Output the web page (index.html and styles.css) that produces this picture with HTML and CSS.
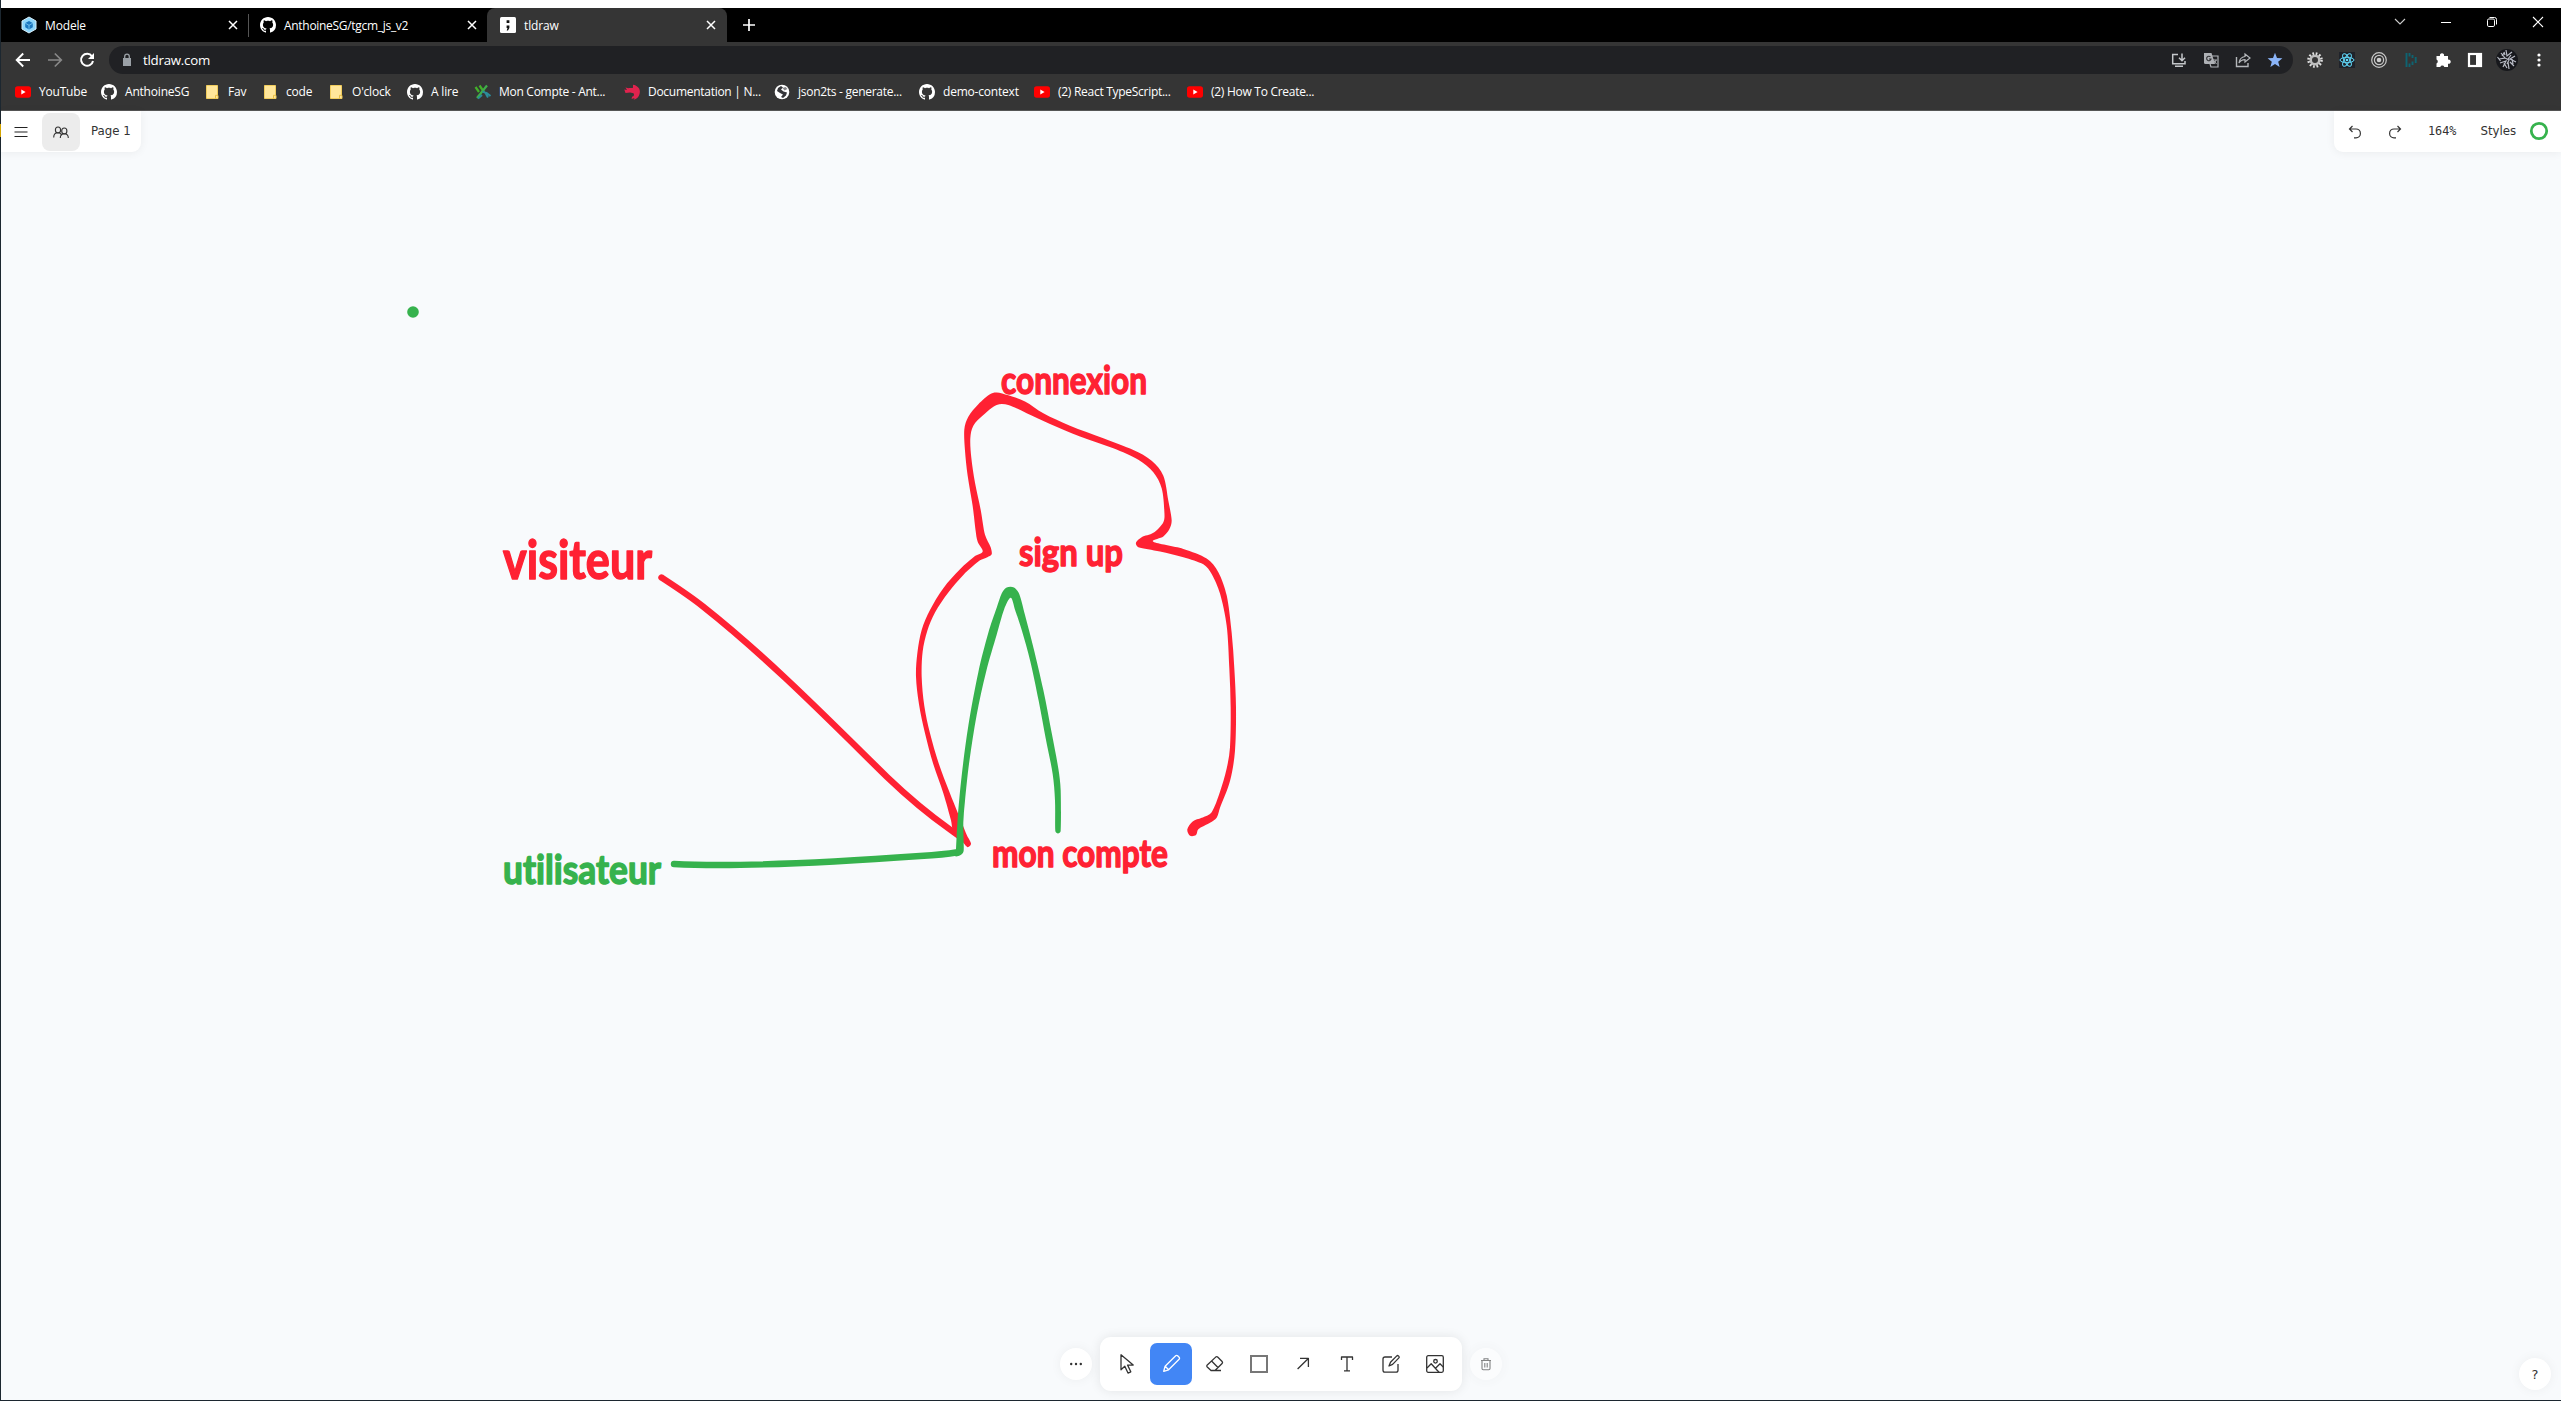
FILE: index.html
```html
<!DOCTYPE html>
<html lang="fr">
<head>
<meta charset="utf-8">
<title>tldraw</title>
<link rel="stylesheet" href="styles.css">
</head>
<body>
<svg class="defs" width="0" height="0">
  <symbol id="github" viewBox="0 0 16 16"><path d="M8 0C3.58 0 0 3.58 0 8c0 3.54 2.29 6.53 5.47 7.59.4.07.55-.17.55-.38 0-.19-.01-.82-.01-1.49-2.01.37-2.53-.49-2.69-.94-.09-.23-.48-.94-.82-1.13-.28-.15-.68-.52-.01-.53.63-.01 1.08.58 1.23.82.72 1.21 1.87.87 2.33.66.07-.52.28-.87.51-1.07-1.78-.2-3.64-.89-3.64-3.95 0-.87.31-1.59.82-2.15-.08-.2-.36-1.02.08-2.12 0 0 .67-.21 2.2.82.64-.18 1.32-.27 2-.27s1.36.09 2 .27c1.53-1.04 2.2-.82 2.2-.82.44 1.1.16 1.92.08 2.12.51.56.82 1.27.82 2.15 0 3.07-1.87 3.75-3.65 3.95.29.25.54.73.54 1.48 0 1.07-.01 1.93-.01 2.2 0 .21.15.46.55.38A8 8 0 0 0 16 8c0-4.42-3.58-8-8-8z" fill="#fff"/></symbol>
  <symbol id="youtube" viewBox="0 0 16 16"><rect y="2.3" width="16" height="11.4" rx="2.6" fill="#f00"/><path d="M6.3 5.6v4.8L10.6 8z" fill="#fff"/></symbol>
  <symbol id="folder" viewBox="0 0 16 16"><path d="M2.5 1.5h11v10h.5v3h-11.500z" fill="#ffe69a" stroke="#f0cc5c"/><path d="M11.500 14.500v-3.200h2.500" fill="none" stroke="#e8bf45"/></symbol>
  <symbol id="close" viewBox="0 0 16 16"><path d="M4 4l8 8M12 4l-8 8" stroke="#fff" stroke-width="1.5"/></symbol>
</svg>
<div class="desktop-strip"></div>
<div class="window">
  <header class="tabs">
    <div class="tab first"><svg class="ic"><g><path d="M8 0l7 4v8l-7 4-7-4V4z" fill="#8ed6fb"/><path d="M8 0l7 4v8l-7 4-7-4V4z" fill="none" stroke="#d8effb"/><path d="M8 4l3.800 2.100v4.200L8 12.400l-3.800-2.100V6.100z" fill="#1c78c0"/><path d="M4.200 6.100L8 8.300l3.800-2.200M8 8.300v4" stroke="#8ed6fb" stroke-width=".7" fill="none"/></g></svg><span>Modele</span><svg class="ic x"><use href="#close"/></svg></div>
    <div class="tab second"><svg class="ic"><use href="#github"/></svg><span class="wide">AnthoineSG/tgcm_js_v2</span><svg class="ic x"><use href="#close"/></svg></div>
    <div class="tab active"><svg class="ic"><rect width="16" height="16" rx="1.500" fill="#fff"/><path d="M6.600 3.200h2.800v2.800H6.600zM6.600 8.500h2.800v2.400L8 13.400H6.700l.8-2.400h-.9z" fill="#111"/></svg><span>tldraw</span><svg class="ic x"><use href="#close"/></svg></div>
    <svg class="ic plus"><path d="M8 2v12M2 8h12" stroke="#fff" stroke-width="1.700"/></svg>
    <div class="winctl">
      <svg class="ic"><path d="M3 5l5 5 5-5" stroke="#ccc" stroke-width="1.100" fill="none"/></svg>
      <svg class="ic"><path d="M3 8.500h10" stroke="#fff"/></svg>
      <svg class="ic"><rect x="3.500" y="5" width="7" height="7.500" rx="1.300" fill="none" stroke="#fff"/><path d="M5.500 3.500h5a2 2 0 0 1 2 2v5" fill="none" stroke="#fff"/></svg>
      <svg class="ic"><path d="M3 3l10 10M13 3L3 13" stroke="#fff" stroke-width="1.100"/></svg>
    </div>
  </header>
  <nav class="toolbar">
    <svg class="ic"><path d="M15 8H2M8.200 1.500L1.700 8l6.500 6.500" stroke="#fff" stroke-width="1.900" fill="none"/></svg>
    <svg class="ic"><path d="M1 8h13M7.800 1.500L14.300 8l-6.500 6.500" stroke="#888" stroke-width="1.700" fill="none"/></svg>
    <svg class="ic"><path d="M13 4.300A6 6 0 1 0 14 9" stroke="#fff" stroke-width="2" fill="none"/><path d="M15 1v6H9z" fill="#fff"/></svg>
    <div class="omnibox">
      <svg class="ic lock"><path d="M4 6h8v8H4z" fill="#9aa0a6"/><path d="M5.700 6V4.500a2.300 2.300 0 0 1 4.600 0V6" stroke="#9aa0a6" stroke-width="1.300" fill="none"/></svg>
      <span class="url">tldraw.com</span>
      <div class="actions">
        <svg class="ic"><path d="M7 2.500H1.700v9.300H14V9M4 14.200h8M11 1.500v7M8 5.700l3 3 3-3" stroke="#c4c7ca" stroke-width="1.500" fill="none"/></svg>
        <svg class="ic"><path d="M1 1h7.500l3.500 11H2.500A1.500 1.500 0 0 1 1 10.500z" fill="#aeb1b5"/><path d="M9 4h6v11H8l-1-3" fill="none" stroke="#aeb1b5" stroke-width="1.200"/><path d="M7.500 5A2.200 2.200 0 1 0 8 7H6" stroke="#303134" stroke-width="1.100" fill="none"/><path d="M10 8h4M13 8c-.5 2-1.200 2.700-2 3.500M11 9l2.500 3" stroke="#aeb1b5" fill="none"/></svg>
        <svg class="ic"><path d="M1.500 5v9.500h11.500V11" stroke="#b4b7ba" stroke-width="1.400" fill="none"/><path d="M10 2l5 4-5 4V7.700C7.500 7.700 5.500 8.500 4 11c.4-3.500 2.600-6 6-6.500z" stroke="#b4b7ba" stroke-width="1.200" fill="none"/></svg>
        <svg class="ic"><path d="M8 .8l2 5.100 5.400.3-4.200 3.500 1.400 5.400L8 12.100l-4.600 3 1.400-5.400L.6 6.200 6 5.900z" fill="#8ab4f8"/></svg>
      </div>
    </div>
    <div class="extensions">
      <svg class="ic"><circle cx="8" cy="8" r="6.500" fill="none" stroke="#e0e0e0" stroke-width="2.600" stroke-dasharray="1.700 1.700"/><circle cx="8" cy="8" r="4.300" fill="none" stroke="#bdbdbd" stroke-width="2.600"/></svg>
      <svg class="ic"><rect width="16" height="16" fill="#20232a"/><g fill="none" stroke="#61dafb" stroke-width="1"><ellipse cx="8" cy="8" rx="7" ry="2.700"/><ellipse cx="8" cy="8" rx="7" ry="2.700" transform="rotate(60 8 8)"/><ellipse cx="8" cy="8" rx="7" ry="2.700" transform="rotate(120 8 8)"/></g><circle cx="8" cy="8" r="1.300" fill="#61dafb"/></svg>
      <svg class="ic"><g fill="none" stroke="#c8c8c8" stroke-width="1.200"><circle cx="8" cy="8" r="7.300"/><circle cx="8" cy="8" r="4.600"/></g><circle cx="8" cy="8" r="2.300" fill="#ccc"/></svg>
      <svg class="ic"><path d="M3.500 1v14M6.500 1v3.500M6.500 11.500V15M9.500 3v3M9.500 9.500V13M12.700 5v6" stroke="#0e6472" stroke-width="1.900"/></svg>
      <svg class="ic"><path d="M1.500 4H5a2.100 2.100 0 1 1 4 0h4v3.700a2.100 2.100 0 1 1 0 4V15H9.300a2.100 2.100 0 0 0-4 0H1.500v-3.600a2.200 2.200 0 0 0 0-4z" fill="#fff"/></svg>
      <svg class="ic"><rect x="2" y="2" width="12" height="12" fill="none" stroke="#fff" stroke-width="2.200"/><path d="M9 2h5v12H9z" fill="#fff"/></svg>
      <svg class="avatar" viewBox="0 0 22 22"><circle cx="11" cy="11" r="11" fill="#17181c"/><path d="M5 4l4 5-6 1M10 1l1 6 5-4M19 7l-5 3 6 3M4 14l6-2-3 6M12 13l1 7M14 13l4 4M9 9l4 2-2 4M15 6l-3 4M1.500 8l3 4M8 3l1 3M6 7l2-3M16 10l1 5M8 14l3 5" stroke="#b9bcc6" stroke-width="1.200" fill="none"/></svg>
      <svg class="ic"><g fill="#fff"><circle cx="8" cy="3" r="1.600"/><circle cx="8" cy="8" r="1.600"/><circle cx="8" cy="13" r="1.600"/></g></svg>
    </div>
  </nav>
  <nav class="bookmarks">
    <a><svg class="ic"><use href="#youtube"/></svg>YouTube</a>
    <a><svg class="ic"><use href="#github"/></svg>AnthoineSG</a>
    <a><svg class="ic"><use href="#folder"/></svg>Fav</a>
    <a><svg class="ic"><use href="#folder"/></svg>code</a>
    <a><svg class="ic"><use href="#folder"/></svg>O'clock</a>
    <a><svg class="ic"><use href="#github"/></svg>A lire</a>
    <a class="tight"><svg class="ic"><path d="M.5 3L4 8M4.500 1.500L9 8" stroke="#43b02a" stroke-width="2.200" fill="none"/><path d="M12 1.500L2 14" stroke="#3fae49" stroke-width="2.200"/><path d="M7.500 7.800q3 0 4 3l1.500 2.700M11 8.500l4.500 3.500M7 11l-4 3.500" stroke="#2c8c99" stroke-width="2" fill="none"/></svg>Mon Compte - Ant...</a>
    <a class="tight"><svg class="ic"><path d="M9 .8c2.500 0 3 1 5 2.500 1.800 1.500 2.300 4 1.600 6.500-.7 3-3 5.500-6 5.900l1-1.700-3 1 .4-2.200c2-.5 2.500-2 1.500-3.500L6 8.500 1.500 9 .3 5.500 3 6 1.500 3.500l3 .8c1-.8 3 .2 4.500-.5z" fill="#e0234e"/></svg>Documentation | N...</a>
    <a class="tight"><svg class="ic"><circle cx="8" cy="8" r="7.300" fill="#fff"/><path d="M4 4l3-2 2 1.500-2 2 2.500 2 3.500 1-1 3-3 2.500-2-1 2-2.500-3-1.500L3 7z" fill="#35363a"/><path d="M8.500 4l3-1 2 2-3 1.500z" fill="#35363a" opacity=".6"/></svg>json2ts - generate...</a>
    <a><svg class="ic"><use href="#github"/></svg>demo-context</a>
    <a class="tight"><svg class="ic"><use href="#youtube"/></svg>(2) React TypeScript...</a>
    <a class="tight"><svg class="ic"><use href="#youtube"/></svg>(2) How To Create...</a>
  </nav>
  <main class="canvas">
    <svg class="drawing" width="2560" height="1289" viewBox="1 111 2560 1289">
      <circle cx="413" cy="312" r="5.800" fill="#36b24d"/>
      <path class="pen red" d="M661.500 577.500C676 587 690 596 703 606.500C767 657 828 719 887 777C911 800 938 821 950 829.500L959 836"/>
      <path id="red-loop" class="ink red"/>
      <g class="label red">
        <text x="503" y="578.500" font-size="54" textLength="149" lengthAdjust="spacingAndGlyphs">visiteur</text>
        <text x="1001" y="393.500" font-size="39" textLength="146" lengthAdjust="spacingAndGlyphs">connexion</text>
        <text x="1019" y="566" font-size="39" textLength="104" lengthAdjust="spacingAndGlyphs">sign up</text>
        <text x="992" y="866.500" font-size="39" textLength="176" lengthAdjust="spacingAndGlyphs">mon compte</text>
      </g>
      <text class="label green" x="503" y="883.500" font-size="40" textLength="158" lengthAdjust="spacingAndGlyphs">utilisateur</text>
      <path class="pen green" d="M674 864C740 867.500 850 861 920 856Q945 854.500 956 852.500"/>
      <path id="green-arch" class="ink green"/>
    </svg>
    <div class="top">
      <div class="panel left">
        <svg class="ic menu"><path d="M1.500 3.500h13M1.500 8h13M1.500 12.500h13" stroke="#222" stroke-width="1.200"/></svg>
        <div class="people"><svg class="ic"><g fill="none" stroke="#333" stroke-width="1.100"><ellipse cx="5" cy="6" rx="2.600" ry="3"/><path d="M.7 13.500c0-3 1.300-4.700 4.300-4.700 2.200 0 3.200 1 3.800 2.500"/><ellipse cx="11.300" cy="7" rx="2.600" ry="3"/><path d="M7.300 14c0-2.500 1.200-4.200 4-4.200s4 1.700 4 4.200"/></g></svg></div>
        <span>Page 1</span>
      </div>
      <div class="panel right">
        <svg class="ic"><path d="M5.500 2L2.500 5l3 3M2.500 5H9a4.400 4.400 0 0 1 0 8.800H7" fill="none" stroke="#333" stroke-width="1.200"/></svg>
        <svg class="ic"><path d="M10.500 2l3 3-3 3M13.500 5H7a4.400 4.400 0 0 0 0 8.800h2" fill="none" stroke="#333" stroke-width="1.200"/></svg>
        <span class="zoom">164%</span><span class="styles">Styles</span>
        <svg class="ring"><circle cx="10" cy="10" r="7.700" fill="none" stroke="#36b24d" stroke-width="2.800"/></svg>
      </div>
    </div>
    <div class="dock">
      <div class="round"><svg class="ic"><g fill="#333"><circle cx="3.200" cy="8" r="1.200"/><circle cx="8" cy="8" r="1.200"/><circle cx="12.800" cy="8" r="1.200"/></g></svg></div>
      <div class="tools">
        <div class="tool"><svg viewBox="0 0 20 20"><path d="M4 .8v15l3.800-3.600 3.200 6.900 2.800-1.300-3.200-6.700h5.600z"/></svg></div>
        <div class="tool on"><svg viewBox="0 0 20 20"><path d="M2.700 17.300l1.400-5L14.700 1.800c.6-.6 1.300-.6 1.900 0l1.500 1.500c.6.600.6 1.300 0 1.900L7.600 15.800zM4.200 12.300l3.400 3.400"/></svg></div>
        <div class="tool"><svg viewBox="0 0 20 20"><path d="M2 11.300l8.700-8.200c.7-.6 1.500-.6 2.200.1l4.200 4.300c.6.700.6 1.400 0 2L10 16.500H6L2 12.700q-.6-.7 0-1.400zM6.800 7.200l6.400 6.500M8 16.500h8"/></svg></div>
        <div class="tool"><svg viewBox="0 0 20 20"><path class="square" d="M2 2h16v16H2z"/></svg></div>
        <div class="tool"><svg viewBox="0 0 20 20"><path d="M4.600 15L15.300 4.500M7 4.400h8.400V13"/></svg></div>
        <div class="tool"><svg viewBox="0 0 20 20"><path d="M4.500 6V3h11v3M10 3v13.600M7 16.800h6"/></svg></div>
        <div class="tool"><svg viewBox="0 0 20 20"><path d="M11 3H4Q2 3 2 5v11.300q0 1.900 2 1.900h11q2 0 2-1.900V10"/><path d="M8 12l1.500-3.800 6.300-6.300q.8-.7 1.600 0l.5.500q.7.800 0 1.500l-6.300 6.500z"/></svg></div>
        <div class="tool"><svg viewBox="0 0 20 20"><rect x="1.700" y="1.700" width="16.600" height="16.600" rx="1.500"/><circle cx="10.500" cy="7.300" r="1.800"/><path d="M2 14l4.200-4.300L14 18.300M10.500 14.300l4.500-4.600 3.300 3.400"/></svg></div>
      </div>
      <div class="round faded"><svg class="ic"><path d="M3 4.500h10M6 4.500V2.700h4v1.800M4 4.500v8q0 1.200 1.200 1.200h5.600q1.200 0 1.200-1.200v-8M6.800 7v4.500M9.200 7v4.500" fill="none" stroke="#222" stroke-width="1.100"/></svg></div>
    </div>
    <div class="round help">?</div>
  </main>
</div>
<script src="strokes.js"></script>
</body>
</html>
```
FILE: styles.css
```css
* { box-sizing: border-box; }
body {
  margin: 0;
  width: 2561px;
  height: 1401px;
  overflow: hidden;
  background: #fff;
  font: 12px "Open Sans", "Noto Sans", sans-serif;
  color: #fff;
}
svg { display: block; flex: none; }
.defs { position: absolute; }
.ic { width: 16px; height: 16px; overflow: visible; }
.desktop-strip { height: 8px; border-left: 1px solid #1c2730; }
.window {
  height: 1393px;
  display: flex;
  flex-direction: column;
  border-left: 1px solid;
  border-image: linear-gradient(#1c2730 117px, #d9a800 117px, #d9a800 130px, #1c2730 130px) 1;
  border-bottom: 1px solid #14141a;
  background: #353535;
}
.tabs { height: 34px; display: flex; background: #000; align-items: stretch; }
.tab { display: flex; align-items: center; gap: 8px; padding: 0 8px; width: 240px; letter-spacing: -.15px; }
.tab .x { margin-left: auto; }
.tab.first { width: 247px; padding-left: 20px; padding-right: 7px; }
.tab.second { width: 239px; padding-left: 11px; padding-right: 7px; border-left: 1px solid #3c3c3c; border-image: linear-gradient(transparent 7px, #555 7px, #555 28px, transparent 28px) 1; }
.tab.active { width: 240px; padding-left: 13px; background: #353535; border-radius: 8px 8px 0 0; }
.wide { letter-spacing: -.3px; }
.plus { margin: 9px 0 0 14px; }
.winctl { margin-left: auto; display: flex; gap: 30px; padding: 6px 15px 0 0; }
.toolbar { height: 36px; display: flex; align-items: center; gap: 16px; padding: 0 14px; }
.omnibox { flex: 1; height: 28px; margin-left: -2px; border-radius: 14px; background: #202124; display: flex; align-items: center; padding: 0 10px; }
.url { font-size: 13.3px; margin-left: 8px; letter-spacing: -.25px; }
.lock { width: 16px; }
.actions { margin-left: auto; display: flex; gap: 16px; }
.extensions { display: flex; align-items: center; gap: 16px; margin-left: -2px; }
.avatar { width: 22px; height: 22px; margin: 0 -3px; }
.bookmarks { height: 33px; display: flex; padding: 0 14px 5px; border-bottom: 1px solid #555; }
.bookmarks a { display: flex; align-items: center; gap: 8px; white-space: nowrap; flex: none; letter-spacing: -.2px; }
.bookmarks a.tight { letter-spacing: -.28px; }
.bookmarks a:nth-child(1) { width: 86px; }
.bookmarks a:nth-child(2) { width: 103px; }
.bookmarks a:nth-child(3) { width: 58px; }
.bookmarks a:nth-child(4) { width: 66px; }
.bookmarks a:nth-child(5) { width: 79px; }
.bookmarks a:nth-child(6) { width: 68px; }
.bookmarks a:nth-child(7) { width: 149px; }
.bookmarks a:nth-child(8) { width: 150px; }
.bookmarks a:nth-child(9) { width: 145px; }
.bookmarks a:nth-child(10) { width: 115px; }
.bookmarks a:nth-child(11) { width: 153px; }

.canvas { flex: 1; position: relative; display: flex; flex-direction: column; justify-content: space-between; background: #f8fafc; color: #333; }
.drawing { position: absolute; left: 0; top: 0; }
.red { fill: #ff2133; stroke: #ff2133; }
.green { fill: #36b24d; stroke: #36b24d; }
.ink { stroke: none; }
.pen { fill: none; stroke-width: 6.4px; stroke-linecap: round; }
.label { font-family: Lato, sans-serif; font-weight: 700; font-variant-ligatures: none; stroke-width: 1.5px; stroke-linejoin: round; }

.top { position: relative; display: flex; justify-content: space-between; font: 11.8px "DejaVu Sans", sans-serif; }
.panel { height: 41px; display: flex; align-items: center; background: #fff; box-shadow: 0 1px 10px rgba(0, 0, 0, .06); }
.panel span { padding-bottom: 2px; }
.panel.left { width: 140px; border-radius: 0 0 9px 0; padding-left: 12px; }
.people { width: 38px; height: 38px; margin: 0 11px 0 13px; border-radius: 8px; background: #ececec; display: flex; align-items: center; justify-content: center; }
.panel.right { width: 227px; border-radius: 0 0 0 9px; padding-left: 13px; gap: 24px; }
.zoom { margin-left: 1px; font-family: "DejaVu Sans Mono", monospace; }
.styles { width: 38px; }
.ring { width: 20px; height: 20px; margin-left: -13px; margin-bottom: 1px; }

.dock { position: relative; display: flex; align-items: center; justify-content: center; gap: 8px; margin-bottom: 8px; height: 56px; }
.tools { width: 362px; height: 54px; display: flex; gap: 2px; align-items: center; padding: 0 6px; border-radius: 11px; background: #fff; box-shadow: 0 0 12px rgba(0, 0, 0, .09); }
.tool { width: 42px; height: 42px; display: flex; align-items: center; justify-content: center; border-radius: 7px; }
.tool svg { width: 20px; height: 20px; fill: none; stroke: #333; stroke-width: 1.3px; stroke-linejoin: round; }
.tool.on { background: #4286f5; }
.tool.on svg { stroke: #fff; }
.tool .square { stroke: #777; stroke-width: 2px; stroke-linejoin: miter; }
.round { width: 32px; height: 32px; border-radius: 50%; background: #fff; display: flex; align-items: center; justify-content: center; box-shadow: 0 0 12px rgba(0, 0, 0, .05); }
.faded { opacity: .55; }
.help { position: absolute; right: 10px; bottom: 10px; font: 13px "DejaVu Sans", sans-serif; }
```
FILE: strokes.js
```js
// Outlines of the pressure-sensitive pen strokes, as x,y pairs in stroke space.
const outlines = {
  "red-loop": "160,1375 153,1345 130,1269 100,1188 75,1101 57,1020 48,943 52,877 65,812 90,756 130,695 180,642 225,605 248,592 233,565 227,535 218,465 203,380 195,310 193,250 205,215 235,180 270,152 290,147 325,155 375,172 430,205 510,240 610,275 700,308 755,338 790,380 805,450 815,505 808,530 790,550 760,565 850,585 920,612 955,650 980,715 995,820 1003,920 1008,1030 1005,1150 990,1235 960,1310 950,1338 930,1352 895,1370 888,1386 870,1388 862,1370 878,1348 905,1338 935,1322 960,1265 980,1200 990,1140 992,1030 988,920 980,800 960,710 935,655 910,628 850,608 780,592 715,580 708,567 725,552 760,540 790,510 793,480 785,415 760,370 715,335 640,303 540,270 450,235 380,205 325,182 290,182 250,210 220,240 211,275 214,330 225,400 242,475 255,545 272,580 275,600 262,608 240,617 190,658 145,707 105,763 82,814 68,872 65,943 73,1025 90,1101 116,1185 148,1265 176,1330 200,1385 213,1410 203,1420 190,1408",
  "green-arch": "168,1425 173,1340 185,1220 205,1080 235,930 265,820 290,750 305,710 320,693 342,693 358,712 375,770 400,860 430,980 455,1100 475,1200 482,1260 482,1375 474,1382 466,1375 465,1290 458,1215 437,1115 416,1010 391,900 366,815 345,755 332,722 312,755 290,825 258,930 230,1050 208,1180 195,1290 190,1350 191,1430 182,1442 165,1445"
};

// Joins the points with a closed Catmull-Rom spline.
for (const [id, list] of Object.entries(outlines)) {
  const pts = list.split(" ").map(p => {
    const [x, y] = p.split(",").map(Number);
    return [900 + x / 3, 340 + y / 2.8];
  });
  const n = pts.length;
  const at = i => pts[(i + n) % n];
  let d = "M" + pts[0];
  for (let i = 0; i < n; i++) {
    const [a, b, c, e] = [at(i - 1), at(i), at(i + 1), at(i + 2)];
    const len = Math.hypot(c[0] - b[0], c[1] - b[1]);
    const k1 = Math.min(1 / 6, len / 3 / Math.hypot(c[0] - a[0], c[1] - a[1]));
    const k2 = Math.min(1 / 6, len / 3 / Math.hypot(e[0] - b[0], e[1] - b[1]));
    d += "C" + [b[0] + (c[0] - a[0]) * k1, b[1] + (c[1] - a[1]) * k1,
      c[0] - (e[0] - b[0]) * k2, c[1] - (e[1] - b[1]) * k2, c[0], c[1]].map(v => v.toFixed(2)).join(" ");
  }
  document.getElementById(id).setAttribute("d", d + "Z");
}
```
